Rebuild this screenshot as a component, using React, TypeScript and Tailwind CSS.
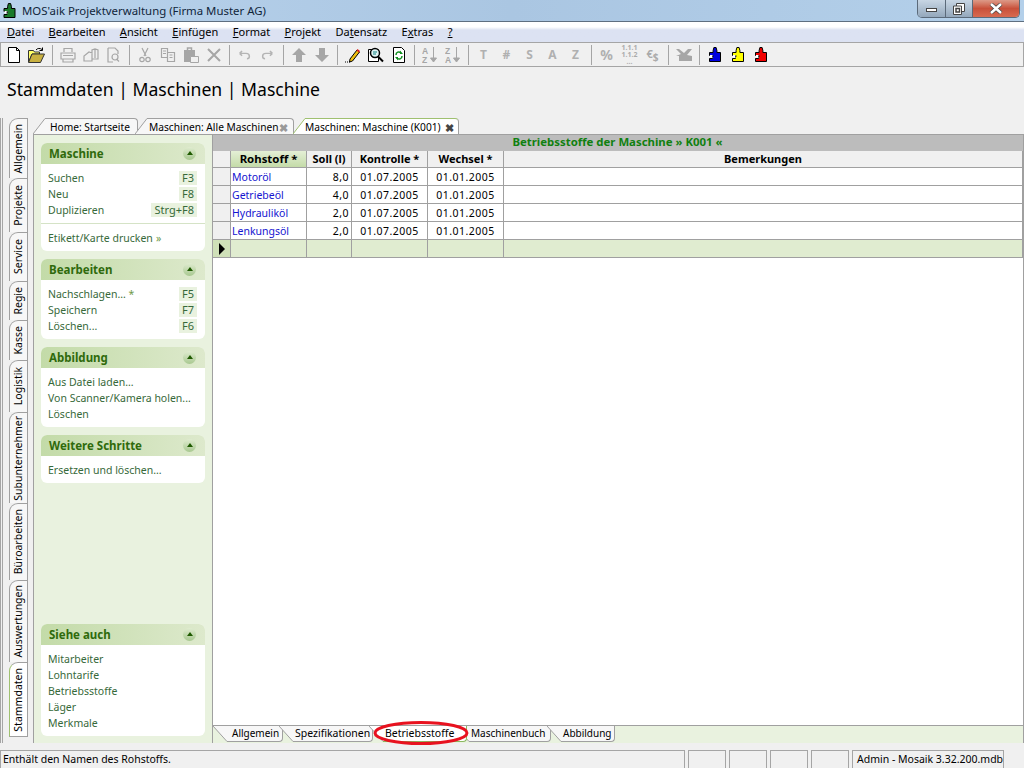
import type { ReactNode } from "react";

const disabled = "#a6a6a6";

function Gray({ children }: { children: ReactNode }) {
  return (
    <svg width="16" height="16" viewBox="0 0 16 16" fill="none" stroke={disabled} strokeWidth="1.2">
      {children}
    </svg>
  );
}

function GrayText({ children, className }: { children: ReactNode; className?: string }) {
  return <span className={`font-bold text-[#b0b0b0] ${className ?? "text-[12px]"}`}>{children}</span>;
}

function Puzzle({ fill, w = 12, h = 15 }: { fill: string; w?: number; h?: number }) {
  return (
    <svg width={w} height={h} viewBox="0 0 12 15">
      <path d="M.5 5.500h3.600V3.600L4.900.5h2.200l.8 3.100v1.900h3.600v9H.5v-3h3v-3h-3z" fill={fill} stroke="#000" />
      <path d="M1 8h3v2.500H1z" fill="#fff" />
      <path d="M3 8.600h1.500v1.200H3z" fill="#000" />
    </svg>
  );
}

const toolbar: (ReactNode | "sep")[] = [
  <svg width="16" height="16" viewBox="0 0 16 16"><path d="M2.500.5h8l3 3v12h-11z" fill="#fff" stroke="#000" /><path d="M10.500.5v3h3" fill="none" stroke="#000" /></svg>,
  <svg width="18" height="16" viewBox="0 0 18 16"><path d="M.5 3.500h5l1 1.500h5v2H4l-3.500 8z" fill="#ffff66" stroke="#333" /><path d="M.5 15.500h12l4-8.500H4z" fill="#c8b040" stroke="#333" /><path d="M8 3C9.500 1 12 1 14 2.500M14.500 .5v3h-3" fill="none" stroke="#000" /></svg>,
  "sep",
  <Gray><path d="M4 5V1.500h8V5M1 6h14v6H1zM3 12v3h10v-3M3 8.500h10" /></Gray>,
  <Gray><path d="M1 14V9l5-4 3 1V3l3-1 3 1v9H9v2zM9 6v6M12 2v9" /></Gray>,
  <Gray><path d="M2 1h7l3 3v3M7 15H2V1M13 14.500l-2.500-2.500" /><circle cx="9" cy="10" r="3" /></Gray>,
  "sep",
  <Gray><path d="M5 1l4 8M11 1L7 9" /><circle cx="5" cy="12.500" r="2.200" /><circle cx="11" cy="12.500" r="2.200" /></Gray>,
  <Gray><path d="M1.500 1.500h6v9h-6zM7.500 5.500h7v9h-7zM3 4h3M3 6.500h3M9.500 8h3M9.500 10.500h3" /></Gray>,
  <svg width="16" height="16" viewBox="0 0 16 16"><path d="M1 3h11v12H1z" fill={disabled} /><path d="M4.500 1h4v4h-4z" fill="none" stroke={disabled} strokeWidth="1.500" /><path d="M7.500 9.500h8v6h-8z" fill="#f0f0f0" stroke={disabled} /></svg>,
  <Gray><path d="M2 2l12 12M14 2L2 14" strokeWidth="2" /></Gray>,
  "sep",
  <svg width="13" height="10" viewBox="0 0 16 12" fill="none" stroke="#b4b4b4" strokeWidth="1.800"><path d="M2 4h8c3 0 4 2 4 3.500s-1 3-3 3M2 4l3-3M2 4l3 3" /></svg>,
  <svg width="13" height="10" viewBox="0 0 16 12" fill="none" stroke="#b4b4b4" strokeWidth="1.800"><path d="M14 4H6C3 4 2 6 2 7.500s1 3 3 3M14 4l-3-3M14 4l-3 3" /></svg>,
  "sep",
  <svg width="16" height="16" viewBox="0 0 16 16"><path d="M8 1l7 7h-4v7H5V8H1z" fill={disabled} /></svg>,
  <svg width="16" height="16" viewBox="0 0 16 16"><path d="M8 15L1 8h4V1h6v7h4z" fill={disabled} /></svg>,
  "sep",
  <svg width="16" height="16" viewBox="0 0 16 16"><path d="M5 12L12 3l2.500 2-7 9-3 1z" fill="#f0c010" stroke="#000" /><path d="M11.500 3.500L12.500 2l2.500 2-1 1.500z" fill="#e02020" /><path d="M0 15h1M2 15h1M4 15h1" stroke="#000" /></svg>,
  <svg width="18" height="16" viewBox="0 0 18 16"><path d="M1.500 2.500h8l2 2v10h-10z" fill="#fff" stroke="#000" /><circle cx="8" cy="6" r="4.500" fill="#dff4f4" stroke="#000" strokeWidth="1.500" /><path d="M6 5h4M6 7h3" stroke="#108080" /><path d="M11 9.500l5 5" stroke="#000" strokeWidth="2" /></svg>,
  <svg width="14" height="16" viewBox="0 0 14 16"><path d="M1.500 .5h8l3 3v12h-11z" fill="#fff" stroke="#000" /><path d="M4 8c0-3 3-4 5-2M10 9c0 3-3 4-5 2" fill="none" stroke="#109020" strokeWidth="1.500" /><path d="M8 3.500v3.500h3zM6 13.500V10H3z" fill="#109020" /></svg>,
  "sep",
  <svg width="16" height="18" viewBox="0 0 16 18"><text x="0" y="7.500" fontSize="8.500" fontWeight="700" fontFamily="Liberation Sans" fill={disabled}>A</text><text x="0" y="16.500" fontSize="8.500" fontWeight="700" fontFamily="Liberation Sans" fill={disabled}>Z</text><path d="M11.500 1v12M8.500 12l3 4 3-4z" fill={disabled} stroke={disabled} /></svg>,
  <svg width="16" height="18" viewBox="0 0 16 18"><text x="0" y="7.500" fontSize="8.500" fontWeight="700" fontFamily="Liberation Sans" fill={disabled}>Z</text><text x="0" y="16.500" fontSize="8.500" fontWeight="700" fontFamily="Liberation Sans" fill={disabled}>A</text><path d="M11.500 1v12M8.500 12l3 4 3-4z" fill={disabled} stroke={disabled} /></svg>,
  "sep",
  <GrayText>T</GrayText>,
  <GrayText>#</GrayText>,
  <GrayText>S</GrayText>,
  <GrayText>A</GrayText>,
  <GrayText>Z</GrayText>,
  "sep",
  <GrayText className="text-[14px]">%</GrayText>,
  <span className="flex flex-col text-center text-[7px] font-bold leading-[7px] text-[#ababab]"><span>1.1.1</span><span>1.1.2</span><span>...</span></span>,
  <span className="flex items-end font-bold leading-none text-[#ababab]"><span className="mb-[3px] text-[11px]">€</span><span className="text-[10px]">$</span></span>,
  "sep",
  <svg width="16" height="14" viewBox="0 0 16 14"><path d="M0 1h3l5 4 4-4h4L11 7l5 1v5H3V8H0l5-2z" fill={disabled} /></svg>,
  "sep",
  <Puzzle fill="#0000e0" />,
  <Puzzle fill="#ffff00" />,
  <Puzzle fill="#f00000" />,
];

// before the mnemonic, the mnemonic, after it
const menu = [
  ["", "D", "atei"],
  ["", "B", "earbeiten"],
  ["", "A", "nsicht"],
  ["", "E", "infügen"],
  ["", "F", "ormat"],
  ["", "P", "rojekt"],
  ["Da", "t", "ensatz"],
  ["E", "x", "tras"],
  ["", "?", ""],
];

const sideTabs = [
  ["Allgemein", "h-[60px]"],
  ["Projekte", "h-[54px]"],
  ["Service", "h-[49px]"],
  ["Regie", "h-[39px]"],
  ["Kasse", "h-[40px]"],
  ["Logistik", "h-[52px]"],
  ["Subunternehmer", "h-[91px]"],
  ["Büroarbeiten", "h-[77px]"],
  ["Auswertungen", "h-[82px]"],
  ["Stammdaten", "h-[75px]"],
];

const rows = [
  ["Motoröl", "8,0"],
  ["Getriebeöl", "4,0"],
  ["Hydrauliköl", "2,0"],
  ["Lenkungsöl", "2,0"],
];

type SideItem = { label: string; key?: string; star?: boolean };

function Card({ title, items, extra }: { title: string; items: SideItem[]; extra?: string }) {
  return (
    <section className="overflow-hidden rounded-[6px] bg-white">
      <header className="flex h-[21px] items-center justify-between bg-gradient-to-r from-[#c3dba8] to-[#dde9cc] pl-[8px] pr-[9px]">
        <h2 className="text-[11.5px] font-bold text-[#2f6a0c]">{title}</h2>
        <span className="flex size-[13px] items-center justify-center rounded-full bg-gradient-to-b from-[#e0ecd0] to-[#a8c890]">
          <span className="mb-[1px] h-0 w-0 border-x-[3px] border-b-[4px] border-x-transparent border-b-[#1f5a00]" />
        </span>
      </header>
      <ul className="pb-[5px] pl-[7px] pr-[8px] pt-[6px] text-[#37693a]">
        {items.map((item) => (
          <li key={item.label} className="flex h-[16px] items-center justify-between">
            <span className="pt-[1px]">
              {item.label}
              {item.star ? <span className="text-[#6f9a4a]"> *</span> : null}
            </span>
            {item.key ? <span className="flex h-[14px] items-center bg-[#e9f2df] px-[3px] text-[11px]">{item.key}</span> : null}
          </li>
        ))}
        {extra ? (
          <>
            <li className="-ml-[7px] -mr-[8px] mb-[6px] mt-[5px] h-px bg-[#d5e3c6]" />
            <li className="flex h-[16px] items-center pt-[1px]">
              {extra} <span className="ml-[3px] text-[#6f9a4a]">»</span>
            </li>
          </>
        ) : null}
      </ul>
    </section>
  );
}

function TopTab({ label, boxClass, active, closable }: { label: string; boxClass: string; active?: boolean; closable?: boolean }) {
  const line = active ? "#9fc070" : "#a0a0a0";
  return (
    <div className={`relative flex h-[16px] items-stretch ${active ? "z-10" : ""}`}>
      <svg width="12" height="16" viewBox="0 0 12 16" className="shrink-0">
        <path d="M0 16L12 .5V16z" fill={active ? "#fff" : "#f7f7f7"} />
        <path d="M0 16L12 .5" stroke={line} fill="none" />
      </svg>
      <div className={`flex items-center justify-between rounded-tr-[4px] border-r border-t border-r-[#a0a0a0] pt-[2px] text-[10.2px] text-black ${active ? "border-t-[#9fc070] bg-white" : "border-t-[#a0a0a0] bg-[#f7f7f7]"} ${boxClass}`}>
        <span>{label}</span>
        {closable ? <span className={`text-[11px] font-bold leading-none ${active ? "text-[#444]" : "text-[#999]"}`}>✖</span> : null}
      </div>
    </div>
  );
}

function BottomTab({ label, boxClass, active }: { label: string; boxClass: string; active?: boolean }) {
  return (
    <div className={`relative flex h-[16px] items-stretch ${active ? "z-10" : ""}`}>
      <svg width="14" height="16" viewBox="0 0 14 16" className="shrink-0">
        <path d="M0 0L14 15.500V0z" fill={active ? "#fff" : "#f7f7f7"} />
        <path d="M0 0L14 15.500" stroke="#a0a0a0" fill="none" />
      </svg>
      <div className={`flex items-center rounded-br-[4px] border-b border-r text-black ${active ? "border-b-[#8cb860] border-r-[#8cb860] bg-white" : "border-b-[#a0a0a0] border-r-[#a0a0a0] bg-[#f7f7f7]"} ${boxClass}`}>
        {label}
      </div>
    </div>
  );
}

export default function App() {
  const cell = "flex h-[18px] items-center border-b border-r border-[#a0a0a0] pt-[2px]";
  const head = "flex h-[17px] items-center justify-center border-b border-r border-[#a0a0a0] bg-[#f0f0f0] text-[11px] font-bold text-black";
  return (
    <div className="flex h-[768px] w-[1024px] flex-col overflow-hidden whitespace-nowrap bg-[#f0f0f0] font-['Noto_Sans',sans-serif] text-[10.5px] text-black">
      <div className="relative flex h-[22px] shrink-0 items-center border-b border-[#5f6f80] bg-gradient-to-r from-[#b9d3ec] via-[#aac6e2] to-[#b4d0ea] pl-[3px]">
        <Puzzle fill="#1a7a2a" w={13} h={15} />
        <span className="ml-[6px] text-[11.4px] text-[#10253a]">MOS'aik Projektverwaltung (Firma Muster AG)</span>
        <div className="absolute right-[4px] top-0 flex h-[18px] overflow-hidden rounded-b-[5px] border border-t-0 border-[#5b6a7a]">
          <button className="flex w-[28px] items-center justify-center border-r border-[#5b6a7a] bg-gradient-to-b from-[#c8d6e4] to-[#94a8bc]">
            <span className="mt-[2px] h-[4px] w-[11px] border border-[#444] bg-white" />
          </button>
          <button className="flex w-[27px] items-center justify-center border-r border-[#5b6a7a] bg-gradient-to-b from-[#c8d6e4] to-[#94a8bc]">
            <svg width="12" height="12" viewBox="0 0 12 12"><path d="M3.500.5h8v8h-8z" fill="#fff" stroke="#444" /><path d="M.5 3h8v8.500h-8z" fill="#fff" stroke="#444" /><path d="M3 5.500h3.500v3.500H3z" fill="none" stroke="#444" strokeWidth="1.500" /></svg>
          </button>
          <button className="flex w-[46px] items-center justify-center bg-gradient-to-b from-[#dc9a88] via-[#c8503a] to-[#d86a50]">
            <svg width="14" height="11" viewBox="0 0 14 11"><path d="M2 1l10 9M12 1L2 10" stroke="#444" strokeWidth="4" /><path d="M2 1l10 9M12 1L2 10" stroke="#fff" strokeWidth="2.500" /></svg>
          </button>
        </div>
      </div>

      <nav className="flex h-[20px] shrink-0 items-center gap-[14.4px] bg-gradient-to-b from-white from-25% to-[#dce2f2] to-40% pl-[7px] text-[11px]">
        {menu.map(([before, mnemonic, after]) => (
          <span key={mnemonic + after}>
            {before}
            <span className="underline">{mnemonic}</span>
            {after}
          </span>
        ))}
      </nav>

      <div className="flex h-[25px] shrink-0 items-center border border-[#a5a5a5] pl-[1px]">
        {toolbar.map((item, i) =>
          item === "sep" ? (
            <span key={i} className="flex h-[20px] w-[8px] justify-center">
              <span className="h-full w-px bg-[#a5a5a5]" />
            </span>
          ) : (
            <span key={i} className="flex h-[20px] w-[23px] items-center justify-center">
              {item}
            </span>
          ),
        )}
      </div>

      <h1 className="flex h-[51px] shrink-0 items-center pb-[7px] pl-[7px] text-[17.6px] text-black">
        Stammdaten | Maschinen | Maschine
      </h1>

      <div className="flex h-[625px] shrink-0">
        <div className="flex w-[33px] shrink-0">
          <div className="h-full w-[3px] shrink-0 border-x border-[#a5a5a5]" />
          <div className="ml-[6px] flex h-[619px] w-[19px] flex-col">
            {sideTabs.map(([label, height]) => {
              const active = label === "Stammdaten";
              return (
                <div
                  key={label}
                  className={`${height} flex items-center justify-center rounded-tl-[9px] border-l border-r border-t border-[#a0a0a0] ${active ? "border-b border-l-[#9fc070] bg-white" : "bg-[#f7f7f7]"}`}
                >
                  <span className="rotate-180 [writing-mode:vertical-rl]">{label}</span>
                </div>
              );
            })}
          </div>
        </div>

        <div className="flex min-w-0 flex-1 flex-col">
          <div className="flex h-[16px] shrink-0">
            <TopTab label="Home: Startseite" boxClass="w-[93px] pl-[5px]" />
            <div className="-ml-[3px]">
              <TopTab label="Maschinen: Alle Maschinen" boxClass="w-[147px] pl-[2px] pr-[5px]" closable />
            </div>
            <div className="-ml-[1px]">
              <TopTab label="Maschinen: Maschine (K001)" boxClass="w-[154px] pr-[4px]" active closable />
            </div>
          </div>

          <div className="flex h-[609px] border-l border-t border-[#a0a0a0]">
            <aside className="flex w-[179px] shrink-0 flex-col gap-[8px] border-r border-[#a0a0a0] bg-[#e9f2df] px-[7px] pb-[7px] pt-[8px]">
              <Card title="Maschine" items={[{ label: "Suchen", key: "F3" }, { label: "Neu", key: "F8" }, { label: "Duplizieren", key: "Strg+F8" }]} extra="Etikett/Karte drucken" />
              <Card title="Bearbeiten" items={[{ label: "Nachschlagen...", key: "F5", star: true }, { label: "Speichern", key: "F7" }, { label: "Löschen...", key: "F6" }]} />
              <Card title="Abbildung" items={[{ label: "Aus Datei laden..." }, { label: "Von Scanner/Kamera holen..." }, { label: "Löschen" }]} />
              <Card title="Weitere Schritte" items={[{ label: "Ersetzen und löschen..." }]} />
              <div className="mt-auto">
                <Card title="Siehe auch" items={[{ label: "Mitarbeiter" }, { label: "Lohntarife" }, { label: "Betriebsstoffe" }, { label: "Läger" }, { label: "Merkmale" }]} />
              </div>
            </aside>

            <main className="flex min-w-0 flex-1 flex-col border-r border-[#a0a0a0] bg-white">
              <div className="flex h-[16px] shrink-0 items-center justify-center bg-[#bcbcbc] pb-[2px] pr-[1px] text-[11.4px] font-bold text-[#108010]">
                Betriebsstoffe der Maschine » K001 «
              </div>
              <div className="grid grid-cols-[18px_76px_45px_76px_76px_1fr]">
                <div className={head} />
                <div className="flex h-[17px] items-center justify-center border-b border-r border-[#a0a0a0] bg-gradient-to-b from-[#e4efd6] to-[#c4dba8] text-[11.4px] font-bold">Rohstoff *</div>
                <div className={head}>Soll (l)</div>
                <div className={head}>Kontrolle *</div>
                <div className={head}>Wechsel *</div>
                <div className={head}>Bemerkungen</div>
                {rows.map(([name, soll]) => (
                  <div key={name} className="contents">
                    <div className={`${cell} bg-[#f0f0f0]`} />
                    <div className={`${cell} pl-[1px] text-[#1414d0]`}>{name}</div>
                    <div className={`${cell} justify-end pr-[2px] tracking-[0.5px]`}>{soll}</div>
                    <div className={`${cell} justify-center tracking-[0.5px]`}>01.07.2005</div>
                    <div className={`${cell} justify-center tracking-[0.5px]`}>01.01.2005</div>
                    <div className={cell} />
                  </div>
                ))}
                <div className="flex h-[18px] items-center justify-center border-b border-r border-[#a0a0a0] bg-[#cfe0b8]">
                  <span className="h-0 w-0 border-y-[6px] border-l-[6px] border-y-transparent border-l-black" />
                </div>
                <div className={`${cell} bg-[#e0ecd0]`} />
                <div className={`${cell} bg-[#e0ecd0]`} />
                <div className={`${cell} bg-[#e0ecd0]`} />
                <div className={`${cell} bg-[#e0ecd0]`} />
                <div className={`${cell} bg-[#e0ecd0]`} />
              </div>

              <div className="relative mt-auto flex h-[18px] shrink-0 border-t border-[#a0a0a0] bg-[#e9f2df]">
                <BottomTab label="Allgemein" boxClass="w-[56px] pl-[5px] text-[10px]" />
                <div className="-ml-[4px]">
                  <BottomTab label="Spezifikationen" boxClass="w-[80px] pl-[2px]" />
                </div>
                <div className="-ml-[4px]">
                  <BottomTab label="Betriebsstoffe" boxClass="w-[84px] pl-[2px]" active />
                </div>
                <div className="-ml-[12px]">
                  <BottomTab label="Maschinenbuch" boxClass="w-[82px] pl-[2px] text-[10px]" />
                </div>
                <div className="-ml-[4px]">
                  <BottomTab label="Abbildung" boxClass="w-[54px] pl-[2px] text-[10px]" />
                </div>
                <svg className="absolute left-[159px] top-[-6px] z-20" width="98" height="26" viewBox="0 0 98 26">
                  <ellipse cx="49" cy="13" rx="46" ry="10.500" fill="none" stroke="#e8121f" strokeWidth="3" />
                </svg>
              </div>
            </main>
          </div>
        </div>
      </div>

      <footer className="mt-auto flex h-[18px] shrink-0 gap-[3px]">
        <div className="flex w-[685px] items-center border-l border-r border-t border-[#a5a5a5] pl-[2px]">Enthält den Namen des Rohstoffs.</div>
        <div className="w-[38px] border-l border-r border-t border-[#a5a5a5]" />
        <div className="w-[38px] border-l border-r border-t border-[#a5a5a5]" />
        <div className="w-[38px] border-l border-r border-t border-[#a5a5a5]" />
        <div className="w-[38px] border-l border-r border-t border-[#a5a5a5]" />
        <div className="flex w-[152px] items-center border-l border-r border-t border-[#a5a5a5] pl-[4px]">Admin - Mosaik 3.32.200.mdb</div>
      </footer>
    </div>
  );
}
